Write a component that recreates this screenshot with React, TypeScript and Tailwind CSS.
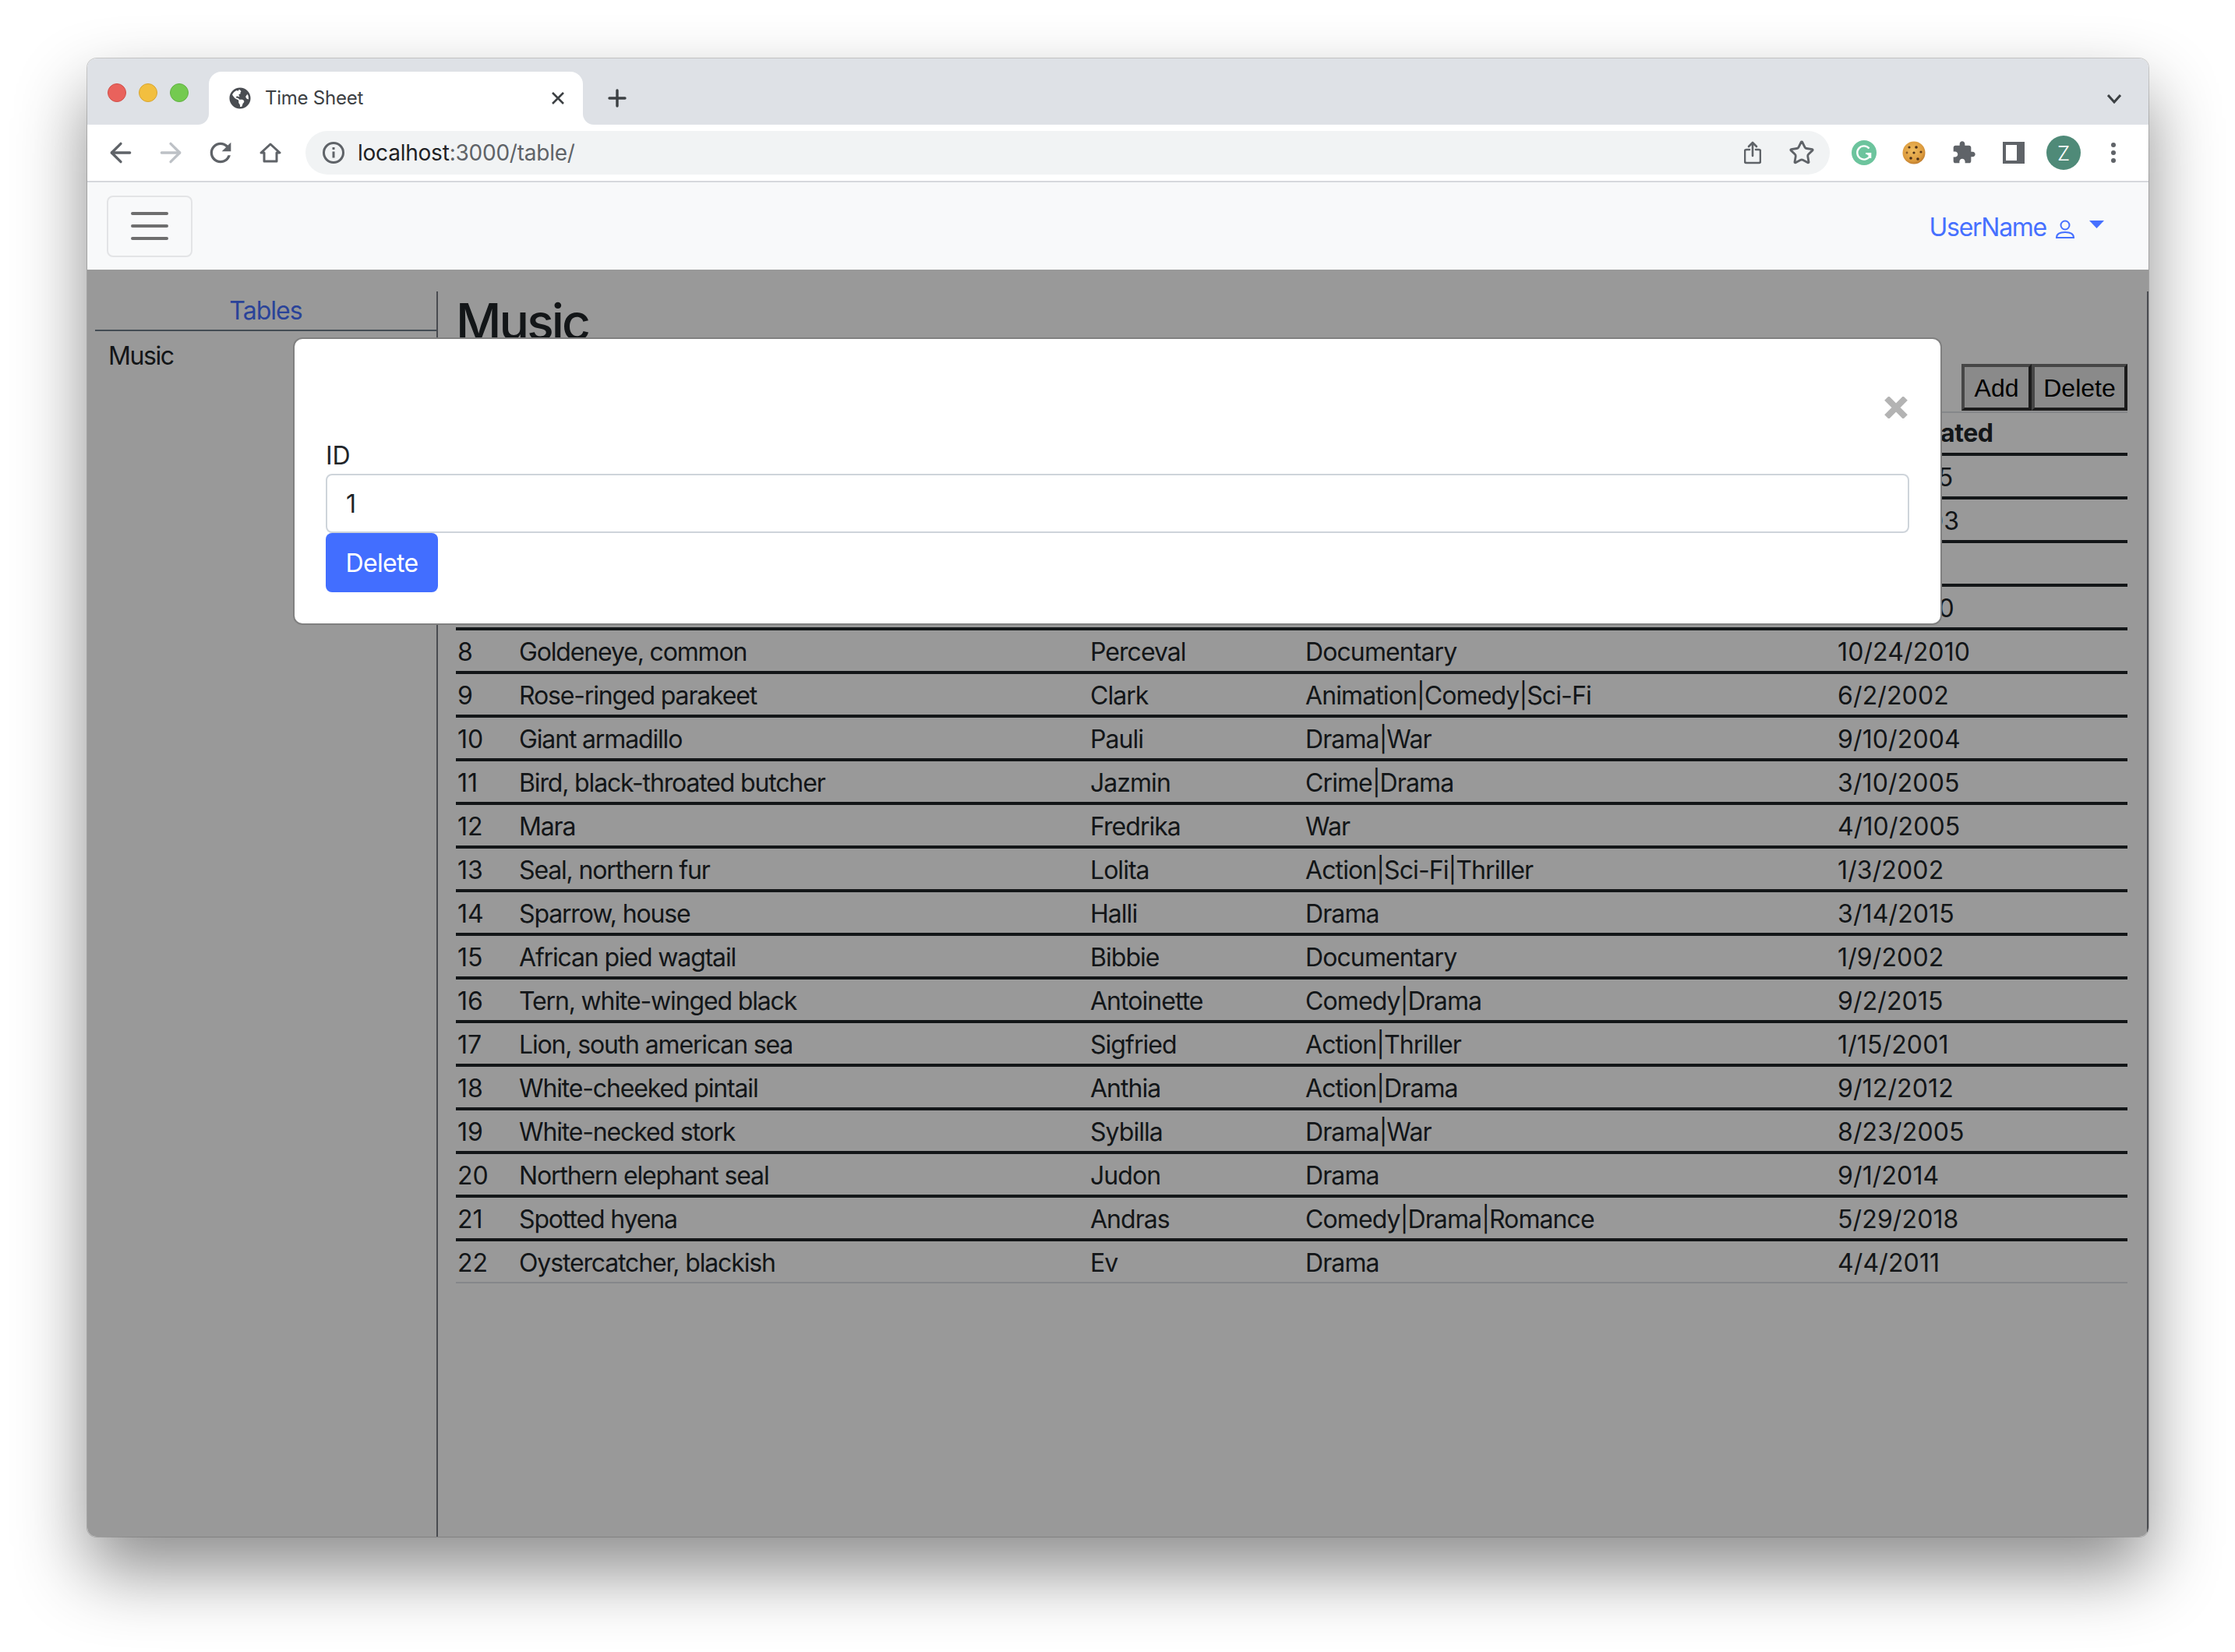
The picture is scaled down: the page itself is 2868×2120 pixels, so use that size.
import { ArrowLeft, ArrowRight, Star } from "lucide-react";
import { FaGlobeAmericas } from "react-icons/fa";

const rows = [
  ["4", "Ox, musk", "Dorris", "Comedy", "1/25/2015"],
  ["5", "Gull, silver", "Reggie", "Drama", "1/23/2003"],
  ["6", "Kangaroo, red", "Tobin", "Horror", "2/1/2001"],
  ["7", "Common wolf", "Maia", "Action", "1/20/2010"],
  ["8", "Goldeneye, common", "Perceval", "Documentary", "10/24/2010"],
  ["9", "Rose-ringed parakeet", "Clark", "Animation|Comedy|Sci-Fi", "6/2/2002"],
  ["10", "Giant armadillo", "Pauli", "Drama|War", "9/10/2004"],
  ["11", "Bird, black-throated butcher", "Jazmin", "Crime|Drama", "3/10/2005"],
  ["12", "Mara", "Fredrika", "War", "4/10/2005"],
  ["13", "Seal, northern fur", "Lolita", "Action|Sci-Fi|Thriller", "1/3/2002"],
  ["14", "Sparrow, house", "Halli", "Drama", "3/14/2015"],
  ["15", "African pied wagtail", "Bibbie", "Documentary", "1/9/2002"],
  ["16", "Tern, white-winged black", "Antoinette", "Comedy|Drama", "9/2/2015"],
  ["17", "Lion, south american sea", "Sigfried", "Action|Thriller", "1/15/2001"],
  ["18", "White-cheeked pintail", "Anthia", "Action|Drama", "9/12/2012"],
  ["19", "White-necked stork", "Sybilla", "Drama|War", "8/23/2005"],
  ["20", "Northern elephant seal", "Judon", "Drama", "9/1/2014"],
  ["21", "Spotted hyena", "Andras", "Comedy|Drama|Romance", "5/29/2018"],
  ["22", "Oystercatcher, blackish", "Ev", "Drama", "4/4/2011"],
];

// Inter runs wider on letters and narrower on digits than the original font
const columnTracking = ["tracking-normal", "tracking-[-0.036em]", "tracking-[-0.03em]", "tracking-[-0.028em]", "tracking-[0.004em]"];

function ToolbarCell({ children }: { children: React.ReactNode }) {
  return <div className="flex w-[64px] shrink-0 items-center justify-center">{children}</div>;
}

function TabStrip() {
  return (
    <div className="flex h-[85px] shrink-0 items-start bg-[#dee1e6]">
      <div className="mt-[32px] ml-[26px] flex gap-4">
        <div className="h-6 w-6 rounded-full border border-[#d0504a] bg-[#e9625c]" />
        <div className="h-6 w-6 rounded-full border border-[#d8a531] bg-[#f2bf3f]" />
        <div className="h-6 w-6 rounded-full border border-[#62b143] bg-[#74ca50]" />
      </div>
      <div className="relative mt-[17px] ml-[26px] flex h-[68px] w-[480px] items-center rounded-t-[16px] bg-white pl-[26px]">
        <div className="absolute bottom-0 -left-[14px] h-[14px] w-[14px] bg-white">
          <div className="h-full w-full rounded-br-[14px] bg-[#dee1e6]" />
        </div>
        <div className="absolute -right-[14px] bottom-0 h-[14px] w-[14px] bg-white">
          <div className="h-full w-full rounded-bl-[14px] bg-[#dee1e6]" />
        </div>
        <FaGlobeAmericas size={28} color="#4a4d52" />
        <span className="ml-[18px] text-[24px] tracking-[-0.01em] text-[#3c4043]">Time Sheet</span>
        <svg className="mr-[23px] ml-auto" width="18" height="18" viewBox="0 0 18 18" fill="none" stroke="#3c4043" strokeWidth="2.6">
          <path d="M2 2l14 14M16 2L2 16" />
        </svg>
      </div>
      <svg className="mt-[39px] ml-[32px]" width="24" height="24" viewBox="0 0 24 24" fill="none" stroke="#3c4043" strokeWidth="3.4" strokeLinecap="round">
        <path d="M12 2v20M2 12h20" />
      </svg>
      <svg className="mt-[46px] mr-[35px] ml-auto" width="18" height="12" viewBox="0 0 18 12" fill="none" stroke="#3c4043" strokeWidth="3">
        <path d="M1 1l8 9 8-9" />
      </svg>
    </div>
  );
}

function Toolbar() {
  return (
    <div className="flex h-[74px] shrink-0 items-center border-b-2 border-[#d6d8dc] bg-white pl-[11px]">
      <ToolbarCell>
        <ArrowLeft size={40} color="#5f6368" strokeWidth={2} />
      </ToolbarCell>
      <ToolbarCell>
        <ArrowRight size={40} color="#bdc1c6" strokeWidth={2} />
      </ToolbarCell>
      <ToolbarCell>
        <svg width="40" height="40" viewBox="0 0 24 24" fill="#5f6368">
          <path d="M17.65 6.35A7.958 7.958 0 0 0 12 4c-4.42 0-7.99 3.58-7.99 8s3.57 8 7.99 8c3.73 0 6.84-2.55 7.73-6h-2.08A5.99 5.99 0 0 1 12 18c-3.31 0-6-2.69-6-6s2.69-6 6-6c1.66 0 3.14.69 4.22 1.78L13 11h7V4l-2.35 2.35z" />
        </svg>
      </ToolbarCell>
      <ToolbarCell>
        <svg width="28" height="28" viewBox="0 0 28 28" fill="none" stroke="#5f6368" strokeWidth="3" strokeLinejoin="round">
          <path d="M14 3L26 14H22V25H6V14H2Z" />
        </svg>
      </ToolbarCell>
      <div className="ml-[13px] flex h-[56px] flex-1 items-center rounded-full bg-[#f1f3f4] pl-[22px]">
        <svg width="28" height="28" viewBox="0 0 28 28" fill="none" stroke="#5f6368" strokeWidth="3">
          <circle cx="14" cy="14" r="12.5" />
          <path d="M14 12.5v8M14 7v3" />
        </svg>
        <span className="ml-[17px] text-[28px] tracking-[-0.008em] text-[#202124]">
          localhost<span className="text-[#5f6368]">:3000/table/</span>
        </span>
        <svg className="mr-[35px] ml-auto" width="22" height="30" viewBox="0 0 22 30" fill="none" stroke="#5f6368" strokeWidth="2.6" strokeLinecap="round" strokeLinejoin="round">
          <path d="M7 11H3a2 2 0 0 0-2 2v13a2 2 0 0 0 2 2h16a2 2 0 0 0 2-2V13a2 2 0 0 0-2-2h-4" />
          <path d="M11 19V2M6 7l5-5 5 5" />
        </svg>
        <Star className="mr-[19px]" size={34} color="#5f6368" strokeWidth={2} />
      </div>
      <div className="flex w-[409px] shrink-0 items-center pl-[12px]">
        <ToolbarCell>
          <svg width="32" height="32" viewBox="0 0 32 32" fill="none">
            <circle cx="16" cy="16" r="16" fill="#6cc49d" />
            <path d="M22.5 10.5A8.6 8.6 0 1 0 23.5 20" stroke="#fff" strokeWidth="2.4" />
            <path d="M18 17h6.2v6M24 20l-4-3" stroke="#fff" strokeWidth="2.2" />
          </svg>
        </ToolbarCell>
        <ToolbarCell>
          <svg width="30" height="30" viewBox="0 0 30 30">
            <defs>
              <radialGradient id="cookie" cx="45%" cy="40%" r="65%">
                <stop offset="0%" stopColor="#eebb5f" />
                <stop offset="70%" stopColor="#dd9c3e" />
                <stop offset="100%" stopColor="#b7742a" />
              </radialGradient>
            </defs>
            <circle cx="15" cy="15" r="14.5" fill="url(#cookie)" />
            <circle cx="9" cy="8" r="1.6" fill="#5a3a1c" />
            <circle cx="18" cy="8" r="1.8" fill="#4a2f18" />
            <circle cx="15" cy="15" r="1.6" fill="#4a2f18" />
            <circle cx="6" cy="15" r="1.4" fill="#8a5a28" />
            <circle cx="24" cy="14" r="1.6" fill="#5a3a1c" />
            <circle cx="11" cy="22" r="1.8" fill="#4a2f18" />
            <circle cx="20" cy="23" r="1.8" fill="#4a2f18" />
          </svg>
        </ToolbarCell>
        <ToolbarCell>
          <svg width="32" height="32" viewBox="0 0 24 24" fill="#5f6368">
            <path d="M20.5 11H19V7c0-1.1-.9-2-2-2h-4V3.5C13 2.12 11.88 1 10.5 1S8 2.12 8 3.5V5H4c-1.1 0-1.99.9-1.99 2v3.8H3.5c1.49 0 2.7 1.21 2.7 2.7s-1.21 2.7-2.7 2.7H2V20c0 1.1.9 2 2 2h3.8v-1.5c0-1.49 1.21-2.7 2.7-2.7 1.49 0 2.7 1.21 2.7 2.7V22H17c1.1 0 2-.9 2-2v-4h1.5c1.38 0 2.5-1.12 2.5-2.5S21.88 11 20.5 11z" />
          </svg>
        </ToolbarCell>
        <ToolbarCell>
          <div className="h-[28px] w-[28px] border-y-4 border-r-[10px] border-l-4 border-[#5f6368]" />
        </ToolbarCell>
        <ToolbarCell>
          <div className="flex h-[44px] w-[44px] items-center justify-center rounded-full bg-[#4f8a78] text-[26px] font-light text-white">Z</div>
        </ToolbarCell>
        <ToolbarCell>
          <div className="flex flex-col gap-1">
            <div className="h-[6px] w-[6px] rounded-full bg-[#5f6368]" />
            <div className="h-[6px] w-[6px] rounded-full bg-[#5f6368]" />
            <div className="h-[6px] w-[6px] rounded-full bg-[#5f6368]" />
          </div>
        </ToolbarCell>
      </div>
    </div>
  );
}

function Navbar() {
  return (
    <div className="flex h-[112px] shrink-0 items-center bg-[#f8f9fa] pr-[57px] pl-[25px]">
      <button className="flex h-[79px] w-[110px] flex-col items-center justify-center gap-3 rounded-lg border-2 border-[#e3e4e6]">
        <div className="h-1 w-12 rounded-full bg-[#6e6e6e]" />
        <div className="h-1 w-12 rounded-full bg-[#6e6e6e]" />
        <div className="h-1 w-12 rounded-full bg-[#6e6e6e]" />
      </button>
      <div className="ml-auto flex items-center pt-1 text-[#4670ff]">
        <span className="text-[32px] tracking-[-0.04em]">UserName</span>
        <svg className="mt-1 ml-3" width="24" height="24" viewBox="0 0 24 24" fill="none" stroke="#4670ff" strokeWidth="2">
          <circle cx="12" cy="7" r="5.5" />
          <path d="M1 23c0-5 4-7 11-7s11 2 11 7z" />
        </svg>
        <svg className="-mt-2 ml-[19px]" width="19" height="10" viewBox="0 0 19 10" fill="#4670ff">
          <path d="M0 0h19L9.5 10z" />
        </svg>
      </div>
    </div>
  );
}

function DataTable() {
  return (
    <table className="w-full table-fixed border-separate border-spacing-0 border-t-2 border-[#dee2e6] text-[32px]">
      <colgroup>
        <col className="w-[79px]" />
        <col className="w-[733px]" />
        <col className="w-[276px]" />
        <col className="w-[683px]" />
        <col />
      </colgroup>
      <thead>
        <tr>
          {["ID", "Animal", "Name", "Genre", "Date Created"].map((h) => (
            <th key={h} className="h-[55px] border-b-4 border-[#212529] px-[2px] text-left font-bold tracking-[-0.012em]">
              {h}
            </th>
          ))}
        </tr>
      </thead>
      <tbody>
        {rows.map((row, i) => {
          const last = i === rows.length - 1;
          return (
            <tr key={row[0]}>
              {row.map((cell, c) => (
                <td
                  key={c}
                  className={`${last ? "h-[54px] border-b-2 border-[#dee2e6]" : "h-[56px] border-b-4 border-[#212529]"} px-[2px] pt-[3px] align-middle ${columnTracking[c]}`}
                >
                  {cell}
                </td>
              ))}
            </tr>
          );
        })}
      </tbody>
    </table>
  );
}

function DeleteModal() {
  return (
    <div className="absolute top-[87px] left-[264px] flex w-[2116px] flex-col rounded-[12px] border-2 border-[#808080] bg-white px-[40px] pb-[40px] text-[32px] text-[#212529]">
      <div className="flex h-[126px] justify-end pt-[74px] pr-[2px]">
        <svg width="30" height="28" viewBox="0 0 30 28" fill="none" stroke="#b3b3b3" strokeWidth="8">
          <path d="M3 2l24 24M27 2L3 26" />
        </svg>
      </div>
      <label className="h-[47px] leading-[48px]">ID</label>
      <input
        readOnly
        value="1"
        className="h-[76px] w-full rounded-lg border-2 border-[#ced4da] bg-white px-6 text-[32px] text-[#212529] outline-none"
      />
      <button className="h-[76px] w-[144px] rounded-lg bg-[#426eff] pt-[1px] tracking-[-0.02em] text-white">Delete</button>
    </div>
  );
}

function Content() {
  return (
    <div className="relative flex flex-1 bg-white text-[#212529]">
      <aside className="w-[448px] shrink-0 pt-[28px] pl-[10px] text-[32px]">
        <div className="h-[51px] border-b-2 border-[#717f8c] text-center leading-[50px] tracking-[-0.03em] text-[#4670ff]">Tables</div>
        <div className="mt-[8px] pl-[17px] leading-[48px] tracking-[-0.045em]">Music</div>
      </aside>
      <main className="mt-[28px] flex-1 border-x-2 border-[#7b7e85] pr-[25px] pl-[23px]">
        <h2 className="text-[64px] leading-[77px] font-medium tracking-[-0.045em]">Music</h2>
        <div className="mt-[16px] flex h-[60px] justify-end text-[32px] text-black [font-family:'Liberation_Sans',sans-serif]">
          <button className="w-[90px] border-4 border-t-[#767676] border-r-[#2e2e2e] border-b-[#2e2e2e] border-l-[#767676] bg-[#e6e6e6] pt-[2px]">Add</button>
          <button className="w-[123px] border-4 border-t-[#767676] border-r-[#2e2e2e] border-b-[#2e2e2e] border-l-[#767676] bg-[#e6e6e6] pt-[2px]">Delete</button>
        </div>
        <div className="mt-[1px]">
          <DataTable />
        </div>
      </main>
      <div className="absolute inset-0 bg-black/40" />
      <DeleteModal />
    </div>
  );
}

export default function App() {
  return (
    <div className="h-[2120px] w-[2868px] overflow-hidden bg-white pt-[75px] pl-[112px] [font-family:Inter,sans-serif]">
      <div className="flex h-[1897px] w-[2645px] flex-col overflow-hidden rounded-[12px] shadow-[0_0_0_1px_rgba(0,0,0,0.18),0_44px_90px_rgba(0,0,0,0.45)]">
        <TabStrip />
        <Toolbar />
        <Navbar />
        <Content />
      </div>
    </div>
  );
}
